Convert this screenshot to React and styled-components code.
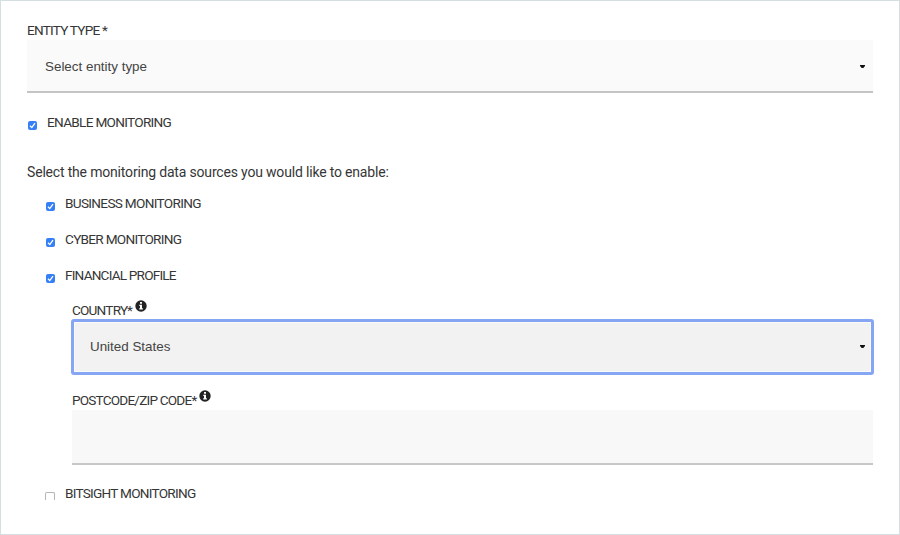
import React, { useState } from 'react';

import styled, { createGlobalStyle } from "styled-components";

const GlobalStyle = createGlobalStyle`
  * {
    box-sizing: border-box;
  }
  body {
    margin: 0;
    background: #fff;
    color: #363636;
    font-family: Roboto, "Noto Sans", sans-serif;
  }
`;

const Panel = styled.form`
  width: 900px;
  height: 535px;
  padding: 20px 26px 0 26px;
  border: 1px solid #d5dfe1;
  background: #fff;
`;

const Label = styled.label`
  display: flex;
  height: ${(props) => props.$height || 20}px;
  font-size: 13.6px;
  line-height: ${(props) => props.$line || 21}px;
  letter-spacing: ${(props) => props.$spacing || 0}px;
  white-space: nowrap;
`;

const SelectBox = styled.div`
  display: flex;
  align-items: center;
  justify-content: space-between;
  height: 53px;
  padding: 2px 8px 0 18px;
  border-bottom: 2px solid #c4c4c4;
  background: #fafafa;
  color: #444;
  font-family: "Liberation Sans", Arial, sans-serif;
  font-size: 13.4px;
`;

const FocusedBox = styled(SelectBox)`
  height: 56px;
  margin: 0 -1px;
  padding: 0 6px 1px 16px;
  border: 3px solid #86a6f3;
  border-radius: 3px;
  background: #f2f2f2;
  box-shadow: inset 0 0 0 1px #fafafa;
`;

const Input = styled.input`
  display: block;
  width: 100%;
  height: 55px;
  padding: 0 18px;
  border: 0;
  border-bottom: 2px solid #c8c8c8;
  background: #f8f8f8;
  outline: none;
`;

const Row = styled.div`
  display: flex;
  height: 36px;
  gap: 10px;
`;

const EnableRow = styled(Row)`
  height: 50px;
  margin-top: 19px;
`;

const Sources = styled.div`
  padding-left: 18px;
`;

const Box = styled.span`
  display: flex;
  width: 9px;
  height: 9px;
  margin: 9px 0 0 1px;
  border-radius: 2px;
  background: #3580f6;
`;

const EmptyBox = styled.span`
  width: 10px;
  height: 8px;
  margin: 8px 0 0 0;
  border: 1px solid #b5b5b5;
  border-bottom: 0;
  border-radius: 2px 2px 0 0;
`;

const Intro = styled.p`
  height: 31px;
  margin: 0;
  font-size: 14px;
  line-height: 21px;
  letter-spacing: -0.18px;
  white-space: nowrap;
`;

const Profile = styled.div`
  padding-left: 27px;
`;

const Field = styled.div`
  height: ${(props) => props.$height}px;
`;

const Info = styled.svg`
  width: 12px;
  height: 12px;
  margin: -1px 0 0 3px;
`;

function Check({ checked }) {
  if (!checked) {
    return <EmptyBox />
  }
  return (
    <Box>
      <svg width="9" height="9" viewBox="0 0 9 9">
        <path d="M2 4.8 3.8 6.6 7 2.2" fill="none" stroke="#fff" strokeWidth="1.3" />
      </svg>
    </Box>
  )
}

function Arrow() {
  return (
    <svg width="5" height="3" viewBox="0 0 5 3">
      <path d="M0 0H5V1L3.3 3H1.7L0 1Z" fill="#111" />
    </svg>
  )
}

function InfoIcon() {
  return (
    <Info viewBox="0 0 12 12">
      <circle cx="6" cy="6" r="5.7" fill="#222" />
      <path d="M5 2H7V3.7H5ZM4.3 4.7H7V8.2H7.9V9.5H4.2V8.2H5V6H4.3Z" fill="#fff" />
    </Info>
  )
}

function App() {
  let [zip, setZip] = useState('');

  return (
    <>
      <GlobalStyle />
      <Panel>
        <Label $height={19} $line={19} $spacing={-0.78}>ENTITY TYPE *</Label>
        <SelectBox>Select entity type<Arrow /></SelectBox>

        <EnableRow>
          <Check checked />
          <Label $line={20} $spacing={-0.7}>ENABLE MONITORING</Label>
        </EnableRow>

        <Intro>Select the monitoring data sources you would like to enable:</Intro>

        <Sources>
          <Row>
            <Check checked />
            <Label $spacing={-0.68}>BUSINESS MONITORING</Label>
          </Row>
          <Row>
            <Check checked />
            <Label $spacing={-0.72}>CYBER MONITORING</Label>
          </Row>
          <Row>
            <Check checked />
            <Label $spacing={-0.8}>FINANCIAL PROFILE</Label>
          </Row>

          <Profile>
            <Field $height={90}>
              <Label $height={18} $line={19} $spacing={-0.8}>COUNTRY*<InfoIcon /></Label>
              <FocusedBox>United States<Arrow /></FocusedBox>
            </Field>
            <Field $height={93}>
              <Label $height={19} $line={19} $spacing={-0.8}>POSTCODE/ZIP CODE*<InfoIcon /></Label>
              <Input value={zip} onChange={(e) => setZip(e.target.value)} />
            </Field>
          </Profile>

          <Row>
            <Check />
            <Label $line={19} $spacing={-0.74}>BITSIGHT MONITORING</Label>
          </Row>
        </Sources>
      </Panel>
    </>
  );
}

export default App;
